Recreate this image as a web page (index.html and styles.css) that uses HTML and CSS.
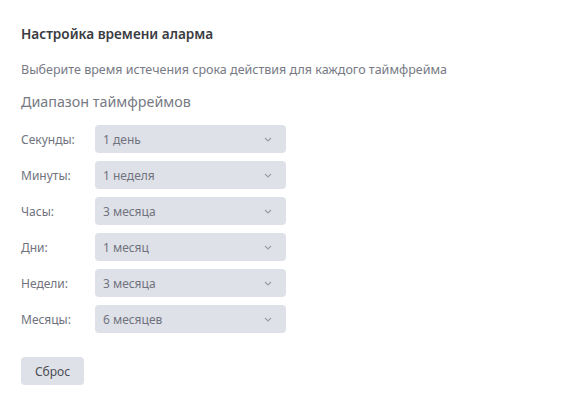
FILE: index.html
```html
<!DOCTYPE html>
<html lang="ru">
<head>
<meta charset="utf-8">
<link rel="stylesheet" href="styles.css">
</head>
<body>
<div class="panel">
  <h1 class="title">Настройка времени аларма</h1>
  <p class="desc">Выберите время истечения срока действия для каждого таймфрейма</p>
  <h2 class="section">Диапазон таймфреймов</h2>
  <div class="rows">
    <div class="row"><span class="label">Секунды:</span><div class="select"><span>1 день</span><svg class="chev" viewBox="0 0 8 5" width="8" height="5"><path d="M1 1l3 3 3-3" fill="none" stroke="#9a9ca6" stroke-width="1.1"/></svg></div></div>
    <div class="row"><span class="label">Минуты:</span><div class="select"><span>1 неделя</span><svg class="chev" viewBox="0 0 8 5" width="8" height="5"><path d="M1 1l3 3 3-3" fill="none" stroke="#9a9ca6" stroke-width="1.1"/></svg></div></div>
    <div class="row"><span class="label">Часы:</span><div class="select"><span>3 месяца</span><svg class="chev" viewBox="0 0 8 5" width="8" height="5"><path d="M1 1l3 3 3-3" fill="none" stroke="#9a9ca6" stroke-width="1.1"/></svg></div></div>
    <div class="row"><span class="label">Дни:</span><div class="select"><span>1 месяц</span><svg class="chev" viewBox="0 0 8 5" width="8" height="5"><path d="M1 1l3 3 3-3" fill="none" stroke="#9a9ca6" stroke-width="1.1"/></svg></div></div>
    <div class="row"><span class="label">Недели:</span><div class="select"><span>3 месяца</span><svg class="chev" viewBox="0 0 8 5" width="8" height="5"><path d="M1 1l3 3 3-3" fill="none" stroke="#9a9ca6" stroke-width="1.1"/></svg></div></div>
    <div class="row"><span class="label">Месяцы:</span><div class="select"><span>6 месяцев</span><svg class="chev" viewBox="0 0 8 5" width="8" height="5"><path d="M1 1l3 3 3-3" fill="none" stroke="#9a9ca6" stroke-width="1.1"/></svg></div></div>
  </div>
  <button class="reset">Сброс</button>
</div>
</body>
</html>
```
FILE: styles.css
```css
html, body {
  margin: 0;
  padding: 0;
  background: #ffffff;
}
body {
  font-family: "Noto Sans", "Open Sans", sans-serif;
  color: #6b6e78;
}
.panel {
  padding: 25px 21px;
  display: flex;
  flex-direction: column;
  align-items: flex-start;
}
.title {
  margin: 0;
  font-size: 13.6px;
  font-weight: 600;
  color: #3a3c42;
  line-height: 18px;
}
.desc {
  margin: 18px 0 0 0;
  font-size: 12.5px;
  line-height: 18px;
  color: #777a84;
}
.section {
  margin: 13px 0 0 0;
  font-size: 14.3px;
  font-weight: 400;
  line-height: 20px;
  color: #777a84;
}
.rows {
  margin-top: 13px;
  display: flex;
  flex-direction: column;
  gap: 8px;
}
.row {
  display: flex;
  align-items: center;
}
.label {
  width: 74px;
  font-size: 12px;
  color: #70737d;
}
.select {
  width: 191px;
  height: 28px;
  box-sizing: border-box;
  background: #dfe1e8;
  border-radius: 4px;
  padding: 0 14px 0 8px;
  display: flex;
  align-items: center;
  justify-content: space-between;
  font-size: 12px;
  color: #70737d;
}
.reset {
  margin-top: 24px;
  width: 63px;
  height: 28px;
  border: none;
  border-radius: 4px;
  background: #dfe1e8;
  font-family: inherit;
  font-size: 12px;
  color: #4a4c54;
  padding: 0;
}
```
